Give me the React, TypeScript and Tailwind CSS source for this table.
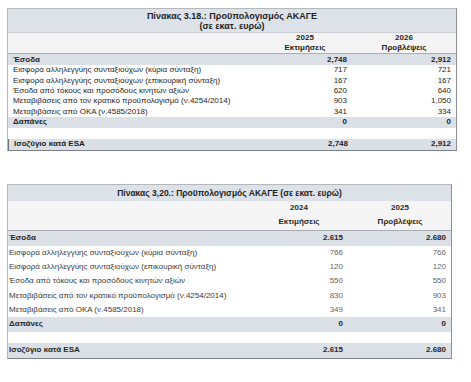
import React from "react";

type Row = { label: string; a: string; b: string; kind?: "band" | "blank" | "total" };

const font = { fontFamily: '"Liberation Sans", Arial, sans-serif' };

const top: Row[] = [
  { label: "Έσοδα", a: "2,748", b: "2,912", kind: "band" },
  { label: "Εισφορά αλληλεγγύης συνταξιούχων (κύρια σύνταξη)", a: "717", b: "721" },
  { label: "Εισφορά αλληλεγγύης συνταξιούχων (επικουρική σύνταξη)", a: "167", b: "167" },
  { label: "Έσοδα από τόκους και προσόδους κινητών αξιών", a: "620", b: "640" },
  { label: "Μεταβιβάσεις από τον κρατικό προϋπολογισμό (ν.4254/2014)", a: "903", b: "1,050" },
  { label: "Μεταβιβάσεις από ΟΚΑ (ν.4585/2018)", a: "341", b: "334" },
  { label: "Δαπάνες", a: "0", b: "0", kind: "band" },
  { label: "", a: "", b: "", kind: "blank" },
  { label: "Ισοζύγιο κατά ESA", a: "2,748", b: "2,912", kind: "total" },
];

const bottom: Row[] = [
  { label: "Έσοδα", a: "2.615", b: "2.680", kind: "band" },
  { label: "Εισφορά αλληλεγγύης συνταξιούχων (κύρια σύνταξη)", a: "766", b: "766" },
  { label: "Εισφορά αλληλεγγύης συνταξιούχων (επικουρική σύνταξη)", a: "120", b: "120" },
  { label: "Έσοδα από τόκους και προσόδους κινητών αξιών", a: "550", b: "550" },
  { label: "Μεταβιβάσεις από τον κρατικό προϋπολογισμό (ν.4254/2014)", a: "830", b: "903" },
  { label: "Μεταβιβάσεις από ΟΚΑ (ν.4585/2018)", a: "349", b: "341" },
  { label: "Δαπάνες", a: "0", b: "0", kind: "band" },
  { label: "", a: "", b: "", kind: "blank" },
  { label: "Ισοζύγιο κατά ESA", a: "2.615", b: "2.680", kind: "total" },
];

function TopTable() {
  return (
    <div className="ml-[7px] mt-[8px] w-[450px] border border-[#b4b8bd] border-r-[#8d9095] border-b-[#7d8085] text-[8px] leading-none text-[#1e1e1e]">
      <div className="flex h-[24px] flex-col items-center justify-center border-b border-[#c9cdd2] bg-[#dde2e9] text-[9px] font-bold leading-[10px]">
        <div>Πίνακας 3.18.: Προϋπολογισμός ΑΚΑΓΕ</div>
        <div>(σε εκατ. ευρώ)</div>
      </div>
      <div className="grid h-[21px] grid-cols-[250px_94px_1fr] border-b border-[#a9adb3] bg-[#f4f4f4] font-bold leading-[10px]">
        <div />
        <div className="flex flex-col items-center justify-center">
          <div>2025</div>
          <div>Εκτιμήσεις</div>
        </div>
        <div className="flex flex-col items-center justify-center">
          <div>2026</div>
          <div>Προβλέψεις</div>
        </div>
      </div>
      {top.map((r, i) => (
        <div
          key={i}
          className={`grid grid-cols-[250px_94px_1fr] items-center ${
            r.kind === "band" || r.kind === "total"
              ? "h-[11px] bg-[#dbe0e7] font-bold"
              : r.kind === "blank"
              ? "h-[11px] bg-white"
              : "h-[10.4px] bg-white"
          } ${r.kind === "total" ? "border-l border-[#6f7277]" : ""}`}
        >
          <div className="pl-[5px]">{r.label}</div>
          <div className="pr-[5px] text-right">{r.a}</div>
          <div className="pr-[5px] text-right">{r.b}</div>
        </div>
      ))}
    </div>
  );
}

function BottomTable() {
  return (
    <div className="ml-[7px] mt-[33px] w-[445px] border border-[#b4b8bd] border-r-[#8d9095] border-b-[#7d8085] text-[8px] leading-none text-[#3a3a3a]">
      <div className="flex h-[16px] items-center justify-center bg-[#dde2e9] text-[8.5px] font-bold text-[#1e1e1e]">
        Πίνακας 3,20.: Προϋπολογισμός ΑΚΑΓΕ (σε εκατ. ευρώ)
      </div>
      <div className="grid h-[30px] grid-cols-[241px_100px_1fr] border-b border-[#a9adb3] bg-[#f5f5f5] font-bold text-[#2a2a2a]">
        <div />
        <div className="flex flex-col items-center justify-center gap-[6px]">
          <div>2024</div>
          <div>Εκτιμήσεις</div>
        </div>
        <div className="flex flex-col items-center justify-center gap-[6px]">
          <div>2025</div>
          <div>Προβλέψεις</div>
        </div>
      </div>
      {bottom.map((r, i) => (
        <div
          key={i}
          className={`grid grid-cols-[241px_100px_1fr] items-center ${
            r.kind === "band" || r.kind === "total"
              ? "h-[15px] bg-[#dbe0e7] font-bold text-[#262626]"
              : r.kind === "blank"
              ? "h-[11px] bg-white"
              : "h-[14.2px] bg-white"
          }`}
        >
          <div className="pl-[1px]">{r.label}</div>
          <div className={`pr-[6px] text-right ${r.kind ? "" : "text-[#666]"}`}>{r.a}</div>
          <div className={`pr-[5px] text-right ${r.kind ? "" : "text-[#666]"}`}>{r.b}</div>
        </div>
      ))}
    </div>
  );
}

export default function App() {
  return (
    <div className="h-[382px] w-[471px] overflow-hidden bg-white" style={font}>
      <TopTable />
      <BottomTable />
    </div>
  );
}
